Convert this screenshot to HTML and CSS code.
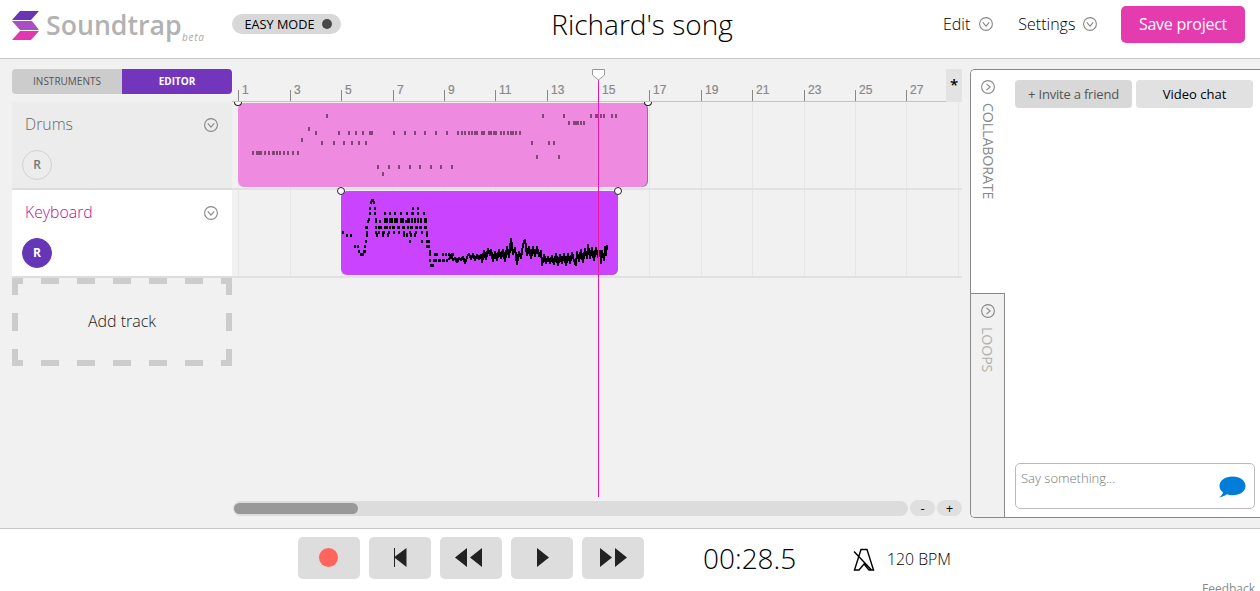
FILE: index.html
```html
<!DOCTYPE html>
<html lang="en">
<head>
<meta charset="utf-8">
<title>Soundtrap</title>
<link rel="stylesheet" href="styles.css">
</head>
<body>
<svg class="defs" width="0" height="0">
  <symbol id="chev" viewBox="0 0 14 14"><circle cx="7" cy="7" r="6.4"/><path d="M3.8 5.4 7 9.2 10.2 5.4"/></symbol>
</svg>
<header class="header">
  <svg class="logo" width="28" height="30" viewBox="0 0 28 30">
    <path fill="#6a35b5" d="M8 0h19l-8 9H0z"/>
    <path fill="#a94fc4" d="M0 10h20l7 9H8z"/>
    <path fill="#e038b0" d="M8 20h19l-8 9H0z"/>
  </svg>
  <span class="brand">Soundtrap</span><span class="beta">beta</span>
  <button class="mode">EASY MODE<i class="dot"></i></button>
  <h1 class="song">Richard's song</h1>
  <nav class="menu">
    <span class="menu-item">Edit<svg class="chev"><use href="#chev"/></svg></span>
    <span class="menu-item">Settings<svg class="chev"><use href="#chev"/></svg></span>
  </nav>
  <button class="save">Save project</button>
</header>
<main class="main">
  <section class="tracks">
    <div class="tabs"><span class="tab">INSTRUMENTS</span><span class="tab tab-on">EDITOR</span></div>
    <div class="track">
      <div class="track-top"><span>Drums</span><svg class="chev"><use href="#chev"/></svg></div>
      <span class="rec">R</span>
    </div>
    <div class="track track-on">
      <div class="track-top"><span>Keyboard</span><svg class="chev"><use href="#chev"/></svg></div>
      <span class="rec rec-on">R</span>
    </div>
    <div class="add">
      <svg class="dashes" width="220" height="88"><path d="M0 3H220M0 85H220" stroke-dasharray="18" stroke-dashoffset="7"/><path d="M3 0V88M217 0V88" stroke-dasharray="18 18" stroke-dashoffset="1"/></svg>
      <span>Add track</span>
    </div>
  </section>
  <section class="timeline">
    <div class="ruler">
      <div class="ticks bars"><span>1</span><span>3</span><span>5</span><span>7</span><span>9</span><span>11</span><span>13</span><span>15</span><span>17</span><span>19</span><span>21</span><span>23</span><span>25</span><span>27</span></div>
      <div class="snap">*</div>
    </div>
    <div class="lane">
      <div class="grid bars"><i></i><i></i><i></i><i></i><i></i><i></i><i></i><i></i><i></i><i></i><i></i><i></i><i></i><i></i><i></i></div>
      <div class="clip drums">
        <svg width="410" height="84" viewBox="238 103 410 84"><path class="notes" d="M326 114h2v4h-2zM308 127h2v4h-2zM315 131h2v4h-2zM338 131h2v4h-2zM348 131h2v4h-2zM355 131h2v4h-2zM362 131h2v4h-2zM369 131h4v4h-4zM393 131h2v4h-2zM404 131h2v4h-2zM414 131h2v4h-2zM424 131h2v4h-2zM435 131h2v4h-2zM446 131h2v4h-2zM301 138h2v4h-2zM321 141h2v4h-2zM333 141h2v4h-2zM343 141h2v4h-2zM351 141h2v4h-2zM358 141h2v4h-2zM365 141h2v4h-2zM252 151h2v4h-2zM256 151h6v4h-6zM264 151h2v4h-2zM268 151h2v4h-2zM272 151h3v4h-3zM276 151h2v4h-2zM279 151h2v4h-2zM283 151h2v4h-2zM287 151h2v4h-2zM292 151h2v4h-2zM297 151h2v4h-2zM377 165h2v4h-2zM388 165h2v4h-2zM398 165h2v4h-2zM409 165h2v4h-2zM419 165h2v4h-2zM430 165h2v4h-2zM440 165h2v4h-2zM451 165h2v4h-2zM382 172h2v4h-2zM542 114h2v4h-2zM563 114h2v4h-2zM590 114h2v4h-2zM595 114h4v4h-4zM600 114h2v4h-2zM603 114h2v4h-2zM611 114h2v4h-2zM615 114h2v4h-2zM568 121h2v4h-2zM573 121h6v4h-6zM580 121h2v4h-2zM583 121h2v4h-2zM457 131h2v4h-2zM461 131h2v4h-2zM464 131h2v4h-2zM468 131h2v4h-2zM471 131h2v4h-2zM474 131h4v4h-4zM481 131h4v4h-4zM488 131h4v4h-4zM493 131h4v4h-4zM500 131h2v4h-2zM503 131h2v4h-2zM507 131h2v4h-2zM510 131h4v4h-4zM515 131h2v4h-2zM519 131h2v4h-2zM531 141h2v4h-2zM548 141h2v4h-2zM553 141h2v4h-2zM536 155h2v4h-2zM558 155h2v4h-2z"/></svg>
        <b class="knob knob-l"></b><b class="knob knob-r"></b>
      </div>
    </div>
    <div class="lane">
      <div class="grid bars"><i></i><i></i><i></i><i></i><i></i><i></i><i></i><i></i><i></i><i></i><i></i><i></i><i></i><i></i><i></i></div>
      <div class="clip keys">
        <svg width="277" height="84" viewBox="341 191 277 84">
          <path class="keys-notes" d="M342 231h2v3h-2zM346 234h2v3h-2zM350 234h2v3h-2zM354 245h2v3h-2zM357 245h2v3h-2zM358 250h2v3h-2zM360 253h4v3h-4zM363 250h3v3h-3zM364 245h2v3h-2zM365 240h2v3h-2zM366 233h2v4h-2zM366 231h2v2h-2zM365 226h3v3h-3zM367 220h2v3h-2zM368 218h2v3h-2zM369 212h2v3h-2zM374 212h2v3h-2zM369 207h2v3h-2zM374 207h2v3h-2zM370 201h2v3h-2zM373 201h2v3h-2zM371 199h3v3h-3z
          M384 212h2v3h-2zM389 212h2v3h-2zM394 212h2v3h-2zM400 212h2v3h-2zM406 212h2v3h-2zM411 212h3v3h-3zM417 212h2v3h-2zM423 212h2v3h-2zM412 207h2v3h-2zM417 207h2v3h-2z
          M375 218h2v5h-2zM379 220h2v3h-2zM384 218h4v5h-4zM389 218h4v5h-4zM394 218h4v5h-4zM400 218h4v5h-4zM405 220h2v3h-2zM407 218h3v5h-3zM411 218h2v5h-2zM414 218h2v5h-2zM417 218h2v5h-2zM420 218h2v5h-2zM424 218h3v5h-3z
          M375 226h2v3h-2zM378 226h4v3h-4zM384 226h4v3h-4zM389 226h2v3h-2zM392 226h3v3h-3zM397 226h3v3h-3zM402 226h3v3h-3zM407 226h2v3h-2zM410 226h3v3h-3zM415 226h3v3h-3zM419 226h3v3h-3zM424 226h3v3h-3z
          M375 231h2v3h-2zM376 233h2v4h-2zM378 231h2v3h-2zM382 231h2v6h-2zM383 231h2v3h-2zM387 233h2v4h-2zM388 231h2v3h-2zM393 231h2v3h-2zM398 231h2v3h-2zM403 231h2v6h-2zM406 233h2v4h-2zM409 231h2v3h-2zM410 233h2v4h-2zM414 233h2v4h-2zM415 231h2v3h-2zM421 231h2v3h-2zM426 231h2v6h-2z
          M409 240h2v3h-2zM421 240h2v3h-2zM426 240h4v3h-4zM426 245h4v3h-4zM429 250h2v6h-2zM429 259h2v3h-2zM430 264h4v3h-4z
          M434 253h4v3h-4zM442 253h2v3h-2zM445 253h2v3h-2zM448 253h2v3h-2zM451 253h3v3h-3zM433 259h4v3h-4zM438 259h3v3h-3zM442 259h3v3h-3zM446 259h2v3h-2z"/>
          <path class="wave" d="M449 260 451 254 453 261 455 257 457 263 459 257 461 261 463 256 465 264 467 257 469 253 471 260 473 253 475 261 477 254 479 260 481 254 482 263 484 250 486 260 488 248 490 256 491 249 493 262 495 251 497 261 499 249 501 259 503 249 505 262 507 246 509 258 511 238 513 255 515 247 517 265 519 251 521 259 523 245 525 239 527 256 529 246 531 259 533 246 535 257 537 246 539 257 541 250 542 266 544 254 546 264 548 256 550 264 552 255 554 265 556 253 558 266 560 254 562 264 564 253 566 266 568 253 570 264 572 252 574 261 576 266 577 251 579 262 581 249 583 263 585 248 587 259 588 244 590 259 592 247 594 261 596 247 598 258 600 250 601 264 602 250 604 261 605 246 606 256 607 245"/>
        </svg>
        <b class="knob knob-l"></b><b class="knob knob-r"></b>
      </div>
    </div>
    <div class="scroll"><div class="bar"><div class="thumb"></div></div><button>-</button><button>+</button></div>
    <div class="playhead"><svg width="14" height="12" viewBox="0 0 14 12"><path d="M.5.5h12v5.500l-6 5-6-5z"/></svg></div>
  </section>
  <aside class="panel">
    <div class="side">
      <div class="side-tab side-on"><svg class="chev right"><use href="#chev"/></svg><span>COLLABORATE</span></div>
      <div class="side-tab"><svg class="chev right"><use href="#chev"/></svg><span>LOOPS</span></div>
    </div>
    <div class="collab">
      <div class="actions"><button class="invite">+ Invite a friend</button><button>Video chat</button></div>
      <div class="say"><span>Say something...</span>
        <svg width="28" height="22" viewBox="0 0 28 22"><path fill="#007dd8" d="M14.500 0.500C22 .5 27.500 4.500 27.500 10s-5.500 9.300-13 9.300c-2 0-4-.3-5.700-1C6.500 20 4 21 1 21.500c2-1.400 3.500-3 4-5C2.700 14.800 1.500 12.500 1.500 10 1.500 4.500 7 .5 14.500.5z"/></svg>
      </div>
    </div>
  </aside>
</main>
<footer class="footer">
  <button><svg width="62" height="42"><circle cx="30.500" cy="20.500" r="9.500" fill="#ff655d"/></svg></button>
  <button><svg width="62" height="42"><path d="M25 11h1v8.500L37.500 11v19L26 21v9h-1z"/></svg></button>
  <button><svg width="62" height="42"><path d="M15 20.500 27 11v19zM30 20.500 42 11v19z"/></svg></button>
  <button><svg width="62" height="42"><path d="M38 20.500 26 11v19z"/></svg></button>
  <button><svg width="62" height="42"><path d="M30 20.500 18 11v19zM45 20.500 33 11v19z"/></svg></button>
  <span class="time">00:28.5</span>
  <svg class="metro" width="24" height="24" viewBox="0 0 24 24"><path d="M9 1.500h6L21.500 22H17l-5-6-5 6H2.500zM2 3.500 19.500 22"/></svg>
  <span class="bpm">120 BPM</span>
  <span class="feedback">Feedback</span>
</footer>
</body>
</html>
```
FILE: styles.css
```css
* { box-sizing: border-box; }
body { margin: 0; width: 1260px; height: 591px; overflow: hidden; display: flex; flex-direction: column; background: #fff; font-family: "Open Sans", sans-serif; font-weight: 300; color: #000; }
button { border: 0; padding: 0; font: inherit; color: inherit; }
.defs { position: absolute; }
.chev { width: 14px; height: 14px; flex: none; fill: none; stroke: #888; stroke-width: 1.1; }
.right { transform: rotate(-90deg); }

.header { height: 59px; flex: none; display: flex; align-items: flex-start; border-bottom: 1px solid #c8c8c8; padding-left: 12px; }
.logo { margin-top: 11px; flex: none; }
.brand { width: 136px; margin: 6px 0 0 6px; font-size: 26.700px; line-height: 38px; font-weight: 600; color: #b2b2b2; }
.beta { width: 50px; margin-top: 30px; font: italic 400 10px/14px "Open Sans", sans-serif; letter-spacing: .7px; color: #aaa; }
.mode { width: 109px; height: 20px; margin-top: 14px; padding-left: 4px; border-radius: 10px; background: #d8d8d8; font-size: 12.700px; font-weight: 400; display: flex; align-items: center; justify-content: center; gap: 8px; white-space: nowrap; }
.dot { width: 10px; height: 10px; border-radius: 50%; background: #484848; }
.song { width: 200px; margin: 4px 0 0 201px; text-align: center; font-size: 28px; line-height: 40px; font-weight: 300; white-space: nowrap; }
.menu { width: 178px; margin: 12px 0 0 201px; display: flex; gap: 25px; font-size: 16px; line-height: 24px; }
.menu-item { display: flex; align-items: center; gap: 8px; }
.menu-item:first-child { gap: 9px; }
.save { width: 124px; height: 37px; margin-top: 6px; padding-bottom: 2px; border-radius: 5px; background: #e43bae; color: #fff; font-size: 16px; letter-spacing: -.25px; font-weight: 400; }

.main { height: 469px; flex: none; display: flex; padding: 10px 0 0 12px; background: #f1f1f1; }
.tracks { width: 220px; }
.tabs { display: flex; height: 25px; margin-bottom: 8px; border-radius: 4px; overflow: hidden; font-size: 10px; line-height: 25px; text-align: center; font-weight: 400; }
.tab { width: 110px; background: #ccc; color: #555; }
.tab-on { background: #7435bd; color: #fff; font-weight: 700; }
.track { height: 88px; padding: 12px 14px 0 10px; background: #ececec; border-bottom: 2px solid #dcdcdc; color: #666; }
.track-on { background: #fff; color: #b5109c; }
.track-top { display: flex; justify-content: space-between; align-items: center; padding-left: 3px; height: 22px; font-size: 15.800px; }
.track-top span { padding-bottom: 2px; }
.rec { display: block; width: 30px; height: 30px; margin-top: 14px; border: 1px solid #d2d2d2; border-radius: 50%; text-align: center; font-size: 12px; line-height: 28px; font-weight: 600; color: #777; }
.rec-on { background: #6736b6; border-color: #6736b6; color: #fff; font-weight: 700; }
.add { position: relative; height: 88px; padding-bottom: 2px; display: flex; align-items: center; justify-content: center; font-size: 16px; color: #222; }
.dashes { position: absolute; left: 0; top: 0; fill: none; stroke: #ccc; stroke-width: 6; }

.timeline { position: relative; width: 730px; height: 448px; display: flex; flex-direction: column; }
.ruler { display: flex; height: 33px; flex: none; align-items: flex-end; }
.bars { display: grid; grid-template-columns: 52px 51px 52px 51px 51px 52px 51px 51px 52px 51px 52px 51px 51px 52px 4px; padding-left: 6px; }
.ticks { width: 714px; height: 33px; overflow: hidden; align-items: end; border-bottom: 1px solid #c4c4c4; }
.ticks span { height: 20px; padding-left: 4px; background: linear-gradient(#888, #888) 0 100% / 1px 11px no-repeat; font: 400 12px/18px "Liberation Sans", sans-serif; color: #888; -webkit-text-stroke: .2px #888; }
.snap { width: 16px; height: 33px; background: #e3e3e3; text-align: center; font-size: 15px; line-height: 31px; font-weight: 600; }
.lane { position: relative; height: 88px; flex: none; border-bottom: 2px solid #e1e1e1; }
.grid { height: 86px; }
.grid i { border-left: 1px solid #e6e6e6; }
.clip { position: absolute; top: 1px; height: 84px; border-radius: 6px; box-shadow: inset -1px 0 #927392; }
.clip svg { display: block; shape-rendering: crispEdges; }
.drums { left: 6px; width: 410px; background: #ee8be0; }
.keys { left: 109px; width: 277px; background: #ca43ff; }
.notes { fill: #814577; }
.keys-notes { fill: #000; }
.wave { fill: none; stroke: #000; stroke-width: 2; stroke-linejoin: bevel; }
.knob { position: absolute; top: -4px; width: 8px; height: 8px; border: 1px solid #222; border-radius: 50%; background: #fff; }
.drums .knob { top: -1px; height: 4px; border-top: 0; border-radius: 0 0 4px 4px; }
.knob-l { left: -4px; }
.knob-r { right: -4px; }
.scroll { display: flex; gap: 2px; margin-top: auto; padding-bottom: 1px; align-items: center; }
.bar { width: 675px; height: 15px; margin-left: 1px; padding: 2px 1px; border-radius: 8px; background: #dcdcdc; }
.thumb { width: 124px; height: 11px; border-radius: 6px; background: #999; }
.scroll button { width: 25px; height: 16px; border-radius: 8px; background: #dfdfdf; font-size: 13px; line-height: 16px; font-weight: 400; }
.playhead { position: absolute; left: 366px; top: 9px; width: 1px; height: 419px; background: #e31ba8; }
.playhead svg { position: absolute; left: -6px; top: -9px; fill: #fff; stroke: #999; }

.panel { display: flex; width: 290px; height: 449px; margin-left: 8px; border: solid #888; border-width: 1px 0 1px 1px; border-radius: 5px 0 0 5px; background: #fff; overflow: hidden; }
.side { width: 34px; display: flex; flex-direction: column; }
.side-tab { flex: 1; display: flex; flex-direction: column; align-items: center; gap: 9px; padding-top: 10px; background: #f1f1f1; border: solid #888; border-width: 1px 1px 0 0; color: #b0b0b0; }
.side-on { background: #fff; border: 0; color: #888; }
.side-tab span { writing-mode: vertical-rl; margin-right: 1px; font-size: 14.200px; line-height: 20px; font-weight: 400; letter-spacing: -.1px; }
.collab { flex: 1; display: flex; flex-direction: column; justify-content: space-between; padding: 10px 5px 8px 10px; }
.actions { display: flex; gap: 4px; }
.actions button { width: 117px; height: 28px; border-radius: 4px; background: #e1e1e1; font-size: 13px; font-weight: 400; }
.actions .invite { background: #d8d8d8; color: #555; letter-spacing: -.2px; }
.say { display: flex; justify-content: space-between; width: 240px; height: 46px; padding: 5px 8px 0 5px; border: 1px solid #bbb; border-radius: 5px; font-size: 13px; line-height: 18px; color: #777; }
.say svg { margin-top: 7px; }

.footer { height: 63px; flex: none; display: flex; align-items: flex-start; gap: 9px; padding: 8px 0 0 298px; border-top: 1px solid #c8c8c8; overflow: hidden; }
.footer button { width: 62px; height: 42px; border-radius: 5px; background: #ddd; }
.footer button svg { display: block; fill: #222; }
.time { width: 100px; margin-left: 50px; font-size: 28px; line-height: 42px; white-space: nowrap; }
.metro { margin: 11px 0 0 40px; fill: none; stroke: #000; stroke-width: 1.400; }
.bpm { width: 70px; margin-left: 2px; font-size: 15.800px; line-height: 45px; white-space: nowrap; }
.feedback { margin: 43px 0 0 236px; font-size: 12px; line-height: 18px; font-weight: 400; color: #888; }
```
